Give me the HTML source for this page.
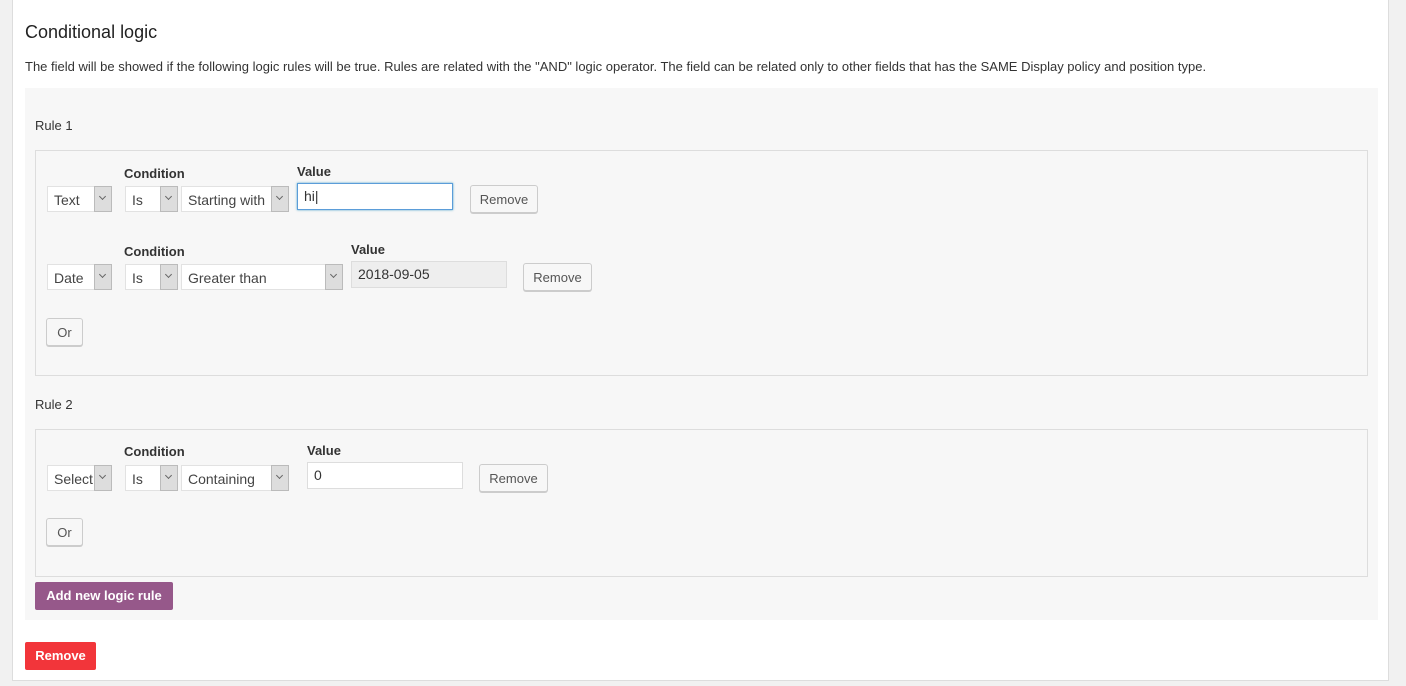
<!DOCTYPE html>
<html><head><style>
body{margin:0;width:1406px;height:686px;background:#f1f1f1;font-family:"Liberation Sans",sans-serif;color:#333;position:relative;overflow:hidden}
.a{position:absolute;box-sizing:border-box}
.panel{left:12px;top:-2px;width:1377px;height:683px;background:#fff;border:1px solid #ddd}
.gray{left:25px;top:88px;width:1353px;height:532px;background:#f7f7f7}
.box{left:35px;width:1333px;border:1px solid #ddd;background:#f7f7f7}
.sel{height:26px;background:#fff;border:1px solid #e2e2e2;font-size:14px;line-height:26px;padding-left:6px;color:#444;white-space:nowrap}
.sel i{position:absolute;right:-1px;top:-1px;width:18px;height:26px;background:#ddd;border:1px solid #bbb;box-sizing:border-box}
.sel i:after{content:"";position:absolute;left:5px;top:7px;width:4px;height:4px;border-right:1px solid #666;border-bottom:1px solid #666;transform:rotate(45deg)}
.lab{font-size:13px;font-weight:bold;color:#333}
.inp{height:27px;background:#fff;border:1px solid #ddd;font-size:14px;line-height:25px;padding-left:6px;color:#333}
.btn{height:28px;background:#f7f7f7;border:1px solid #ccc;border-radius:3px;box-shadow:0 1px 0 #ccc;font-size:13px;line-height:28px;text-align:center;color:#555}
.t{font-size:13px;color:#333}
</style></head><body>
<div class="a panel"></div>
<div class="a" style="left:25px;top:22px;font-size:18px;color:#222">Conditional logic</div>
<div class="a t" style="left:25px;top:59px">The field will be showed if the following logic rules will be true. Rules are related with the "AND" logic operator. The field can be related only to other fields that has the SAME Display policy and position type.</div>
<div class="a gray"></div>
<div class="a t" style="left:35px;top:118px">Rule 1</div>
<div class="a box" style="top:150px;height:226px"></div>
<div class="a lab" style="left:124px;top:166px">Condition</div>
<div class="a lab" style="left:297px;top:164px">Value</div>
<div class="a sel" style="left:47px;top:186px;width:65px">Text<i></i></div>
<div class="a sel" style="left:125px;top:186px;width:53px">Is<i></i></div>
<div class="a sel" style="left:181px;top:186px;width:108px">Starting with<i></i></div>
<div class="a inp" style="left:297px;top:183px;width:156px;border-color:#5b9dd9;box-shadow:0 0 2px rgba(30,140,190,.8)">hi|</div>
<div class="a btn" style="left:470px;top:185px;width:68px">Remove</div>
<div class="a lab" style="left:124px;top:244px">Condition</div>
<div class="a lab" style="left:351px;top:242px">Value</div>
<div class="a sel" style="left:47px;top:264px;width:65px">Date<i></i></div>
<div class="a sel" style="left:125px;top:264px;width:53px">Is<i></i></div>
<div class="a sel" style="left:181px;top:264px;width:162px">Greater than<i></i></div>
<div class="a inp" style="left:351px;top:261px;width:156px;background:#eee">2018-09-05</div>
<div class="a btn" style="left:523px;top:263px;width:69px">Remove</div>
<div class="a btn" style="left:46px;top:318px;width:37px">Or</div>
<div class="a t" style="left:35px;top:397px">Rule 2</div>
<div class="a box" style="top:429px;height:148px"></div>
<div class="a lab" style="left:124px;top:444px">Condition</div>
<div class="a lab" style="left:307px;top:443px">Value</div>
<div class="a sel" style="left:47px;top:465px;width:65px">Select<i></i></div>
<div class="a sel" style="left:125px;top:465px;width:53px">Is<i></i></div>
<div class="a sel" style="left:181px;top:465px;width:108px">Containing<i></i></div>
<div class="a inp" style="left:307px;top:462px;width:156px">0</div>
<div class="a btn" style="left:479px;top:464px;width:69px">Remove</div>
<div class="a btn" style="left:46px;top:518px;width:37px">Or</div>
<div class="a" style="left:35px;top:582px;width:138px;height:28px;background:#96588a;border-radius:2px;color:#fff;font-size:13px;font-weight:bold;line-height:28px;text-align:center">Add new logic rule</div>
<div class="a" style="left:25px;top:642px;width:71px;height:28px;background:#f2353a;border-radius:2px;color:#fff;font-size:13px;font-weight:bold;line-height:28px;text-align:center">Remove</div>
</body></html>
